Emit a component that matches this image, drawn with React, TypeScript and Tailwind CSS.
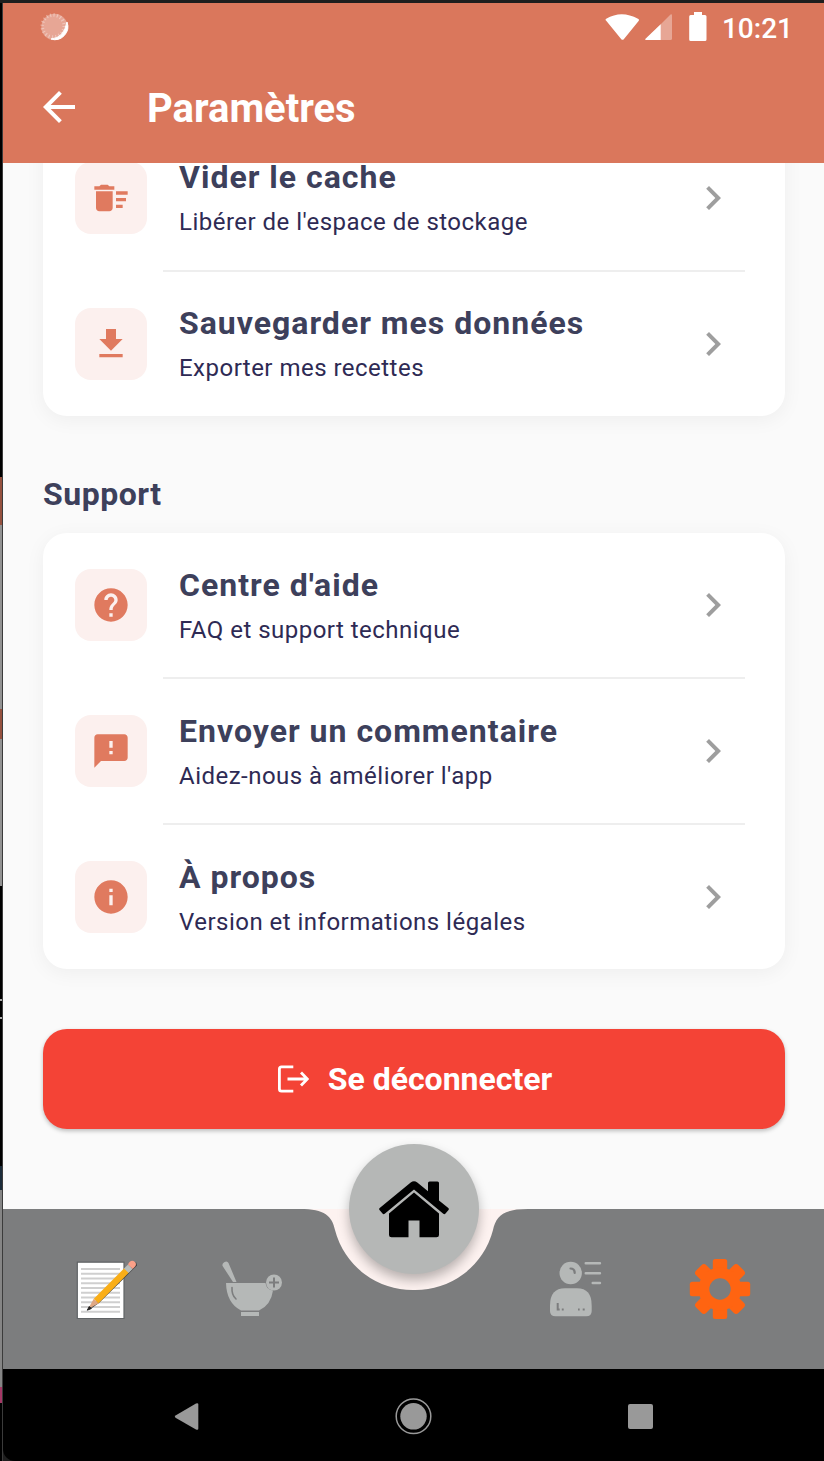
import React from "react";
import { MdArrowBack, MdDeleteSweep, MdGetApp, MdHelp, MdFeedback, MdInfo, MdChevronRight } from "react-icons/md";
import type { IconType } from "react-icons";

function Row({ icon: Icon, title, sub, raised }: { icon: IconType; title: string; sub: string; raised?: boolean }) {
  return (
    <div className="flex h-36 items-center pl-8 pr-12">
      <div className="flex size-[72px] shrink-0 items-center justify-center rounded-2xl bg-[#fcf0ee] text-[#e07a5f]">
        <Icon className="size-10" />
      </div>
      <div className={raised ? "ml-8 flex-1 pb-[2px] whitespace-nowrap" : "ml-8 flex-1 whitespace-nowrap"}>
        <div className="text-[32px] leading-[44px] font-bold tracking-[1px] text-[#3d405b]">{title}</div>
        <div className="pt-[6px] text-[24px] leading-[34px] tracking-[0.48px] text-[#2e2a54]">{sub}</div>
      </div>
      <MdChevronRight className="size-12 shrink-0 text-[#9e9e9e]" />
    </div>
  );
}

function Divider() {
  return <div className="ml-[120px] mr-10 h-[2px] bg-[#eeeeee]" />;
}

function Card({ children }: { children: React.ReactNode }) {
  return <div className="rounded-3xl bg-white shadow-[0_4px_20px_rgba(0,0,0,0.05)]">{children}</div>;
}

function StatusIcons() {
  return (
    <svg width="104" height="32" viewBox="0 0 104 32" fill="#fff">
      <path d="M1 8.500Q0 7.600 1.200 6.800Q16.500-2.500 33 6.800Q34.600 7.700 33.600 8.900L18.800 27.200Q17.500 28.500 16.300 27.200Z" />
      <path d="M40 28 65.500 2.600Q67 1.600 67 3.500V26.500Q67 28 65.500 28Z" opacity=".35" />
      <path d="M55.700 12.200V28H41Q39.500 27.800 40.500 26.700Z" />
      <path d="M89 0h8v3h3q1.500 0 1.500 1.500v23q0 1.500-1.500 1.500H85.700q-1.500 0-1.500-1.500v-23Q84.200 3 85.700 3H89z" />
    </svg>
  );
}

function LogoutIcon() {
  return (
    <svg width="33" height="30" viewBox="0 0 33 30" fill="none" stroke="#fff" strokeWidth="2.800">
      <path d="M17.300 2.900H5.500Q3.400 2.900 3.400 5V25Q3.400 27.100 5.500 27.100H17.300" />
      <path d="M11.500 15H31M25 8.500 31.300 15 25 21.500" />
    </svg>
  );
}

function NoteIcon() {
  return (
    <svg width="64" height="64" viewBox="0 0 64 64">
      <path d="M2.300 5.200H49V61.500H2.300z" fill="#fff" stroke="#616466" strokeWidth="1.200" />
      <path d="M6 12H45M6 16.800H45M6 21.500H45M6 26.300H45M6 31H45M6 35.800H45M6 40.500H45M6 45.300H45M6 50H45M6 54.800H45" stroke="#cfcfcf" strokeWidth="2" />
      <path d="M14 53 24 46 62 8.500 61 5 22 44z" fill="#3c3c3c" />
      <path d="M13 52 18.800 41.800 23.800 46.200z" fill="#dfa783" />
      <path d="M12.300 53.200 14.300 49.500 16.300 51.500z" fill="#222" stroke="#222" />
      <path d="M18.800 41.800 49.500 11 54 15.500 23.500 46.200z" fill="#f9ae18" />
      <path d="M49 11.500 53 7.500 57.700 12 53.700 16z" fill="#b9bdbb" />
      <path d="M53 7.500Q55 3 58.500 4Q62 5.500 60.500 9L57.700 12z" fill="#fba088" />
    </svg>
  );
}

function BowlIcon() {
  return (
    <svg width="62" height="56" viewBox="0 0 62 56" fill="#b5b8b7">
      <path d="M2.200 1.300Q5-.8 6.500 2L14.500 21H11L.6 5Q-.2 2.800 2.200 1.300z" />
      <path d="M4 22H43.500Q44.500 29 51 29.500Q49 44 37 49.500H19Q4.500 42 4 22z" />
      <path d="M19 51H37V55H19z" />
      <circle cx="52" cy="21.500" r="8" />
      <path d="M52 16.500V26.500M47 21.500H57" stroke="#7c7d7e" strokeWidth="2" />
      <path d="M10 26.500Q9.500 34 14 38" fill="none" stroke="#7c7d7e" strokeWidth="1.600" strokeLinecap="round" />
    </svg>
  );
}

function ProfileIcon() {
  return (
    <svg width="52" height="56" viewBox="0 0 52 56" fill="#b5b8b7">
      <circle cx="20.700" cy="12" r="11.200" />
      <path d="M0 44.500Q0 27.300 15 27.300H27Q41.700 27.300 41.700 44.500V50Q41.700 55.300 36.200 55.300H5.500Q0 55.300 0 50z" />
      <path d="M35.700 2.200H50M35.700 12.200H50M42.700 22H50" stroke="#b5b8b7" strokeWidth="2.400" strokeLinecap="round" />
      <path d="M20.500 7.500Q24.700 7.500 24.700 12" fill="none" stroke="#7c7d7e" strokeWidth="2.200" strokeLinecap="round" />
      <path d="M7.700 42V48.600H9.700M11.800 48.600H13.700M28 48.600H29.700M32.700 48.600H34.700" fill="none" stroke="#7c7d7e" strokeWidth="2" />
    </svg>
  );
}

function GearIcon() {
  return (
    <svg width="62" height="62" viewBox="-31 -31 62 62">
      <g fill="#ff6411">
        <rect x="-7.200" y="-30" width="14.400" height="60" rx="2.500" />
        <rect x="-30.200" y="-7.200" width="60.400" height="14.400" rx="2.500" />
        <rect x="-7.200" y="-30" width="14.400" height="60" rx="3.500" transform="rotate(45)" />
        <rect x="-7.200" y="-30" width="14.400" height="60" rx="3.500" transform="rotate(-45)" />
        <circle r="21.500" />
      </g>
      <circle r="10.700" fill="#7c7d7e" />
    </svg>
  );
}

function HomeIcon() {
  return (
    <svg width="70" height="57" viewBox="0 0 70 57">
      <path d="M10 32.500 35 11.500 60 32.500V54Q60 56.300 57.500 56.300H40.500V39.500H29.500V56.300H12.500Q10 56.300 10 54z" />
      <path d="M.7 27 31.700 1.400Q35 -1 38.300 1.400L49 10.300V2Q49 .5 50.500 .5H58.500Q60 .5 60 2V19.500L69.300 27Q70.300 28 69.500 29L66.500 32.500Q65.500 33.700 64.300 32.700L35 8.500 5.700 32.700Q4.500 33.700 3.500 32.500L.5 29Q-.3 28 .7 27z" />
    </svg>
  );
}

export default function App() {
  return (
    <div className="flex h-[1461px] w-[824px] flex-col overflow-hidden bg-[#1e1e1e] font-['Roboto',sans-serif]">
      <div className="h-[3px] shrink-0" />
      <div className="flex flex-1">
        <div className="flex w-[3px] shrink-0 flex-col border-r border-[#3b3b3b] bg-black">
          <div className="h-[474px]" />
          <div className="h-12 bg-[#95513f]" />
          <div className="h-[184px] bg-[#929292]" />
          <div className="h-[30px] bg-[#95513f]" />
          <div className="h-[147px] bg-[#929292]" />
          <div className="h-[113px]" />
          <div className="h-[2px] bg-[#aaaaaa]" />
          <div className="h-4" />
          <div className="h-[2px] bg-[#aaaaaa]" />
          <div className="h-[147px]" />
          <div className="h-6 bg-[#1c2c3a]" />
          <div className="h-[197px] bg-[#858585]" />
          <div className="h-4 bg-[#a53866]" />
        </div>
        <div className="flex flex-1 flex-col">
          <header className="z-10 h-40 shrink-0 bg-[#da775c] text-white">
            <div className="flex h-[60px] items-start pl-[37px] pr-[31px] pt-[9px]">
              <svg width="30" height="30" viewBox="0 0 30 30">
                <circle cx="14.500" cy="15" r="13.200" fill="#fff" opacity=".35" />
                <circle cx="13.200" cy="14" r="11" fill="none" stroke="#fff" strokeWidth="3.500" strokeDasharray="1.200 2.250" opacity=".35" />
                <path d="M27 10A13 13 0 0 1 11 27Q24 26 27 10z" fill="#fff" stroke="#fff" strokeWidth="1" />
              </svg>
              <div className="ml-auto flex">
                <StatusIcons />
                <span className="ml-[13px] text-[28px] leading-[34px] font-medium">10:21</span>
              </div>
            </div>
            <div className="flex items-center pl-8 pt-[19px]">
              <MdArrowBack className="mb-[2px] size-12" />
              <h1 className="ml-[64px] pt-[2px] text-[40px] leading-[50px] font-bold">Paramètres</h1>
            </div>
          </header>
          <main className="h-[1046px] shrink-0 overflow-hidden bg-[#fafafa] pl-10 pr-[39px]">
            <div className="-mt-[37px]">
              <Card>
                <Row raised icon={MdDeleteSweep} title="Vider le cache" sub="Libérer de l'espace de stockage" />
                <Divider />
                <Row raised icon={MdGetApp} title="Sauvegarder mes données" sub="Exporter mes recettes" />
              </Card>
            </div>
            <h2 className="h-[117px] pt-[57px] text-[32px] leading-[42px] font-bold tracking-[0.5px] text-[#3d405b]">Support</h2>
            <Card>
              <Row icon={MdHelp} title="Centre d'aide" sub="FAQ et support technique" />
              <Divider />
              <Row icon={MdFeedback} title="Envoyer un commentaire" sub="Aidez-nous à améliorer l'app" />
              <Divider />
              <Row icon={MdInfo} title="À propos" sub="Version et informations légales" />
            </Card>
            <button className="mt-[60px] flex h-[100px] w-full items-center justify-center rounded-3xl bg-[#f44336] text-[32px] font-bold text-white shadow-[0_2px_4px_rgba(0,0,0,0.25)]">
              <LogoutIcon />
              <span className="ml-[19px]">Se déconnecter</span>
            </button>
          </main>
          <nav className="relative h-40 shrink-0 bg-[#fdf2f0]">
            <svg className="absolute inset-0" width="821" height="160" viewBox="0 0 821 160">
              <path d="M0 0H297C322 0 329 7 332 21A80 80 0 0 0 411 81A80 80 0 0 0 490 21C493 7 500 0 525 0H821V160H0z" fill="#7c7d7e" />
            </svg>
            <div className="relative flex h-full items-center">
              <div className="ml-[72px] pb-px"><NoteIcon /></div>
              <div className="ml-[83px]"><BowlIcon /></div>
              <div className="ml-[266px]"><ProfileIcon /></div>
              <div className="ml-[87px]"><GearIcon /></div>
            </div>
            <div className="absolute -top-[65px] left-[346px] z-10 flex size-[130px] items-center justify-center rounded-full bg-[#b5b7b6] shadow-[0_6px_12px_rgba(0,0,0,0.28)]">
              <HomeIcon />
            </div>
          </nav>
          <div className="flex flex-1 items-center rounded-bl-xl bg-black pt-[2px]">
            <svg className="ml-[171px]" width="26" height="30" viewBox="0 0 26 30"><path d="M1.500 14.500 22 2.500Q24.300 1.500 24.300 3.500V27.500Q24.300 29.500 22 28.500L1.500 16.700Q0 15.500 1.500 14.500z" fill="#999" /></svg>
            <svg className="ml-[195px]" width="38" height="38" viewBox="0 0 38 38" fill="#999"><circle cx="18.500" cy="19.300" r="13.200" /><circle cx="18.500" cy="19.300" r="17.300" fill="none" stroke="#999" strokeWidth="1.500" /></svg>
            <div className="ml-[195px] mt-px size-[25px] rounded-[2px] bg-[#999]" />
          </div>
        </div>
      </div>
    </div>
  );
}
